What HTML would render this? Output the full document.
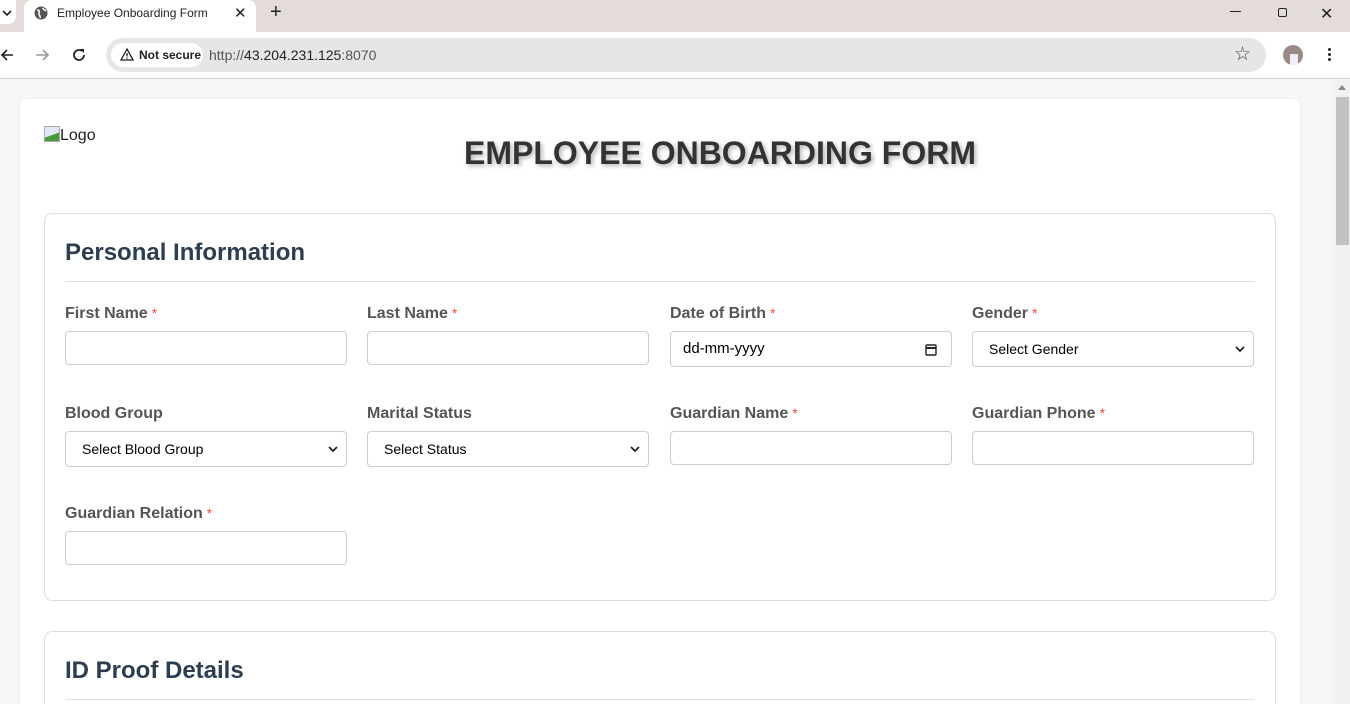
<!DOCTYPE html>
<html style="width:1350px;height:704px;overflow:hidden"><head><meta charset="utf-8"><style>
*{box-sizing:border-box;margin:0;padding:0}
body{width:1350px;height:704px;overflow:hidden;font-family:"Liberation Sans",Arial,sans-serif;background:#f4f5f7;position:relative}
.tabbar{position:absolute;left:0;top:0;width:1350px;height:32px;background:#e3dcda}
.tab{position:absolute;left:24px;top:0;width:232px;height:32px;background:#fff;border-radius:8px 8px 0 0;font-size:12px;color:#222}
.addr{position:absolute;left:0;top:32px;width:1350px;height:47px;background:#fff;border-bottom:1px solid #d0d0d0}
.url{position:absolute;left:106px;top:6px;width:1160px;height:34px;background:#e6e6e6;border-radius:17px}
.ns{position:absolute;left:5px;top:5px;height:24px;width:92px;background:#fff;border-radius:12px;font-size:12px;font-weight:bold;color:#222;line-height:24px;padding-left:28px}
.page{position:absolute;left:0;top:80px;width:1335px;height:624px;background:#f5f6f8}
.sb{position:absolute;left:1335px;top:80px;width:15px;height:624px;background:#f1f1f1}
.card{position:absolute;left:20px;top:99px;width:1280px;height:605px;background:#fff;border-radius:8px 8px 0 0;box-shadow:0 1px 4px rgba(0,0,0,.06)}
h1{position:absolute;top:135px;text-align:center;font-size:32px;font-weight:bold;color:#333;text-shadow:2px 2px 5px rgba(0,0,0,.3)}
.sec{position:absolute;left:44px;width:1232px;border:1px solid #ddd;border-radius:8px;background:#fff}
.sec h2{position:absolute;left:20px;font-size:24px;color:#2c3e50;font-weight:bold}
.sec .hr{position:absolute;left:20px;right:20px;height:1px;background:#ddd}
.lbl{position:absolute;font-size:16px;font-weight:bold;color:#555}
.lbl i{font-style:normal;color:#e74c3c;font-weight:normal;font-size:14px;margin-left:4px}
.in{position:absolute;width:282px;height:34px;border:1px solid #ccc;border-radius:4px;background:#fff;font-size:14px;color:#000;padding-left:16px;line-height:34px}
.sel{height:36px;line-height:34px}
</style></head><body>
<div class="tabbar">
<div style="position:absolute;left:0;top:0;width:16px;height:24px;background:#fff;border-radius:0 0 8px 0"></div>
<svg style="position:absolute;left:2px;top:9px" width="10" height="8"><path d="M1 2l4 4 4-4" stroke="#222" stroke-width="1.6" fill="none"/></svg>
<div class="tab"><svg style="position:absolute;left:10px;top:6px" width="14" height="14"><circle cx="7" cy="7" r="6.5" fill="#555"/><path d="M3 4c2 0 3 1 2 3s2 2 1 5M9 2c0 2 2 2 3 3" stroke="#fff" stroke-width="1.5" fill="none"/></svg><span style="position:absolute;left:33px;top:6px">Employee Onboarding Form</span><span style="position:absolute;left:210px;top:4px;font-size:15px">✕</span></div>
<span style="position:absolute;left:270px;top:1px;font-size:20px;color:#222">+</span>
<div style="position:absolute;left:1230px;top:11px;width:11px;height:1px;background:#222"></div>
<div style="position:absolute;left:1278px;top:8px;width:9px;height:9px;border:1px solid #222;border-radius:2px"></div>
<span style="position:absolute;left:1320px;top:4px;font-size:16px;color:#222">✕</span>
</div>
<div class="addr">
<svg style="position:absolute;left:0;top:15px" width="16" height="16"><path d="M13 8H2M7 3L2 8l5 5" stroke="#222" stroke-width="1.6" fill="none"/></svg>
<svg style="position:absolute;left:34px;top:15px" width="16" height="16"><path d="M2 8h11M9 3l5 5-5 5" stroke="#999" stroke-width="1.6" fill="none"/></svg>
<svg style="position:absolute;left:71px;top:15px" width="16" height="16"><path d="M13 8a5 5 0 1 1-2-4" stroke="#222" stroke-width="1.8" fill="none"/><path d="M9 2h4v4z" fill="#222"/></svg>
<div class="url"><div class="ns"><svg style="position:absolute;left:9px;top:5px" width="14" height="13"><path d="M7 1L1 12h12z" stroke="#222" stroke-width="1.3" fill="none"/><path d="M7 5v3.5M7 9.5v1.2" stroke="#222" stroke-width="1.3"/></svg>Not secure</div>
<span style="position:absolute;left:103px;top:9px;font-size:14px;color:#555">http://<span style="color:#222">43.204.231.125</span>:8070</span>
<span style="position:absolute;left:1128px;top:5px;font-size:19px;color:#444">☆</span></div>
<div style="position:absolute;left:1283px;top:13px;width:20px;height:20px;border-radius:50%;background:#9a8a86"><div style="position:absolute;left:7px;top:9px;width:8px;height:11px;background:#eef"></div></div>
<div style="position:absolute;left:1328px;top:16px;width:3px;height:3px;background:#222;border-radius:50%;box-shadow:0 5px 0 #222,0 10px 0 #222"></div>
</div>
<div class="page"></div>
<div class="sb"><div style="position:absolute;left:1px;top:17px;width:13px;height:148px;background:#c1c1c1"></div><div style="position:absolute;left:3px;top:5px;border:4px solid transparent;border-bottom:5px solid #888;border-top:none"></div></div>
<div class="card"></div>
<div style="position:absolute;left:44px;top:126px;font-size:16px;color:#222"><span style="display:inline-block;width:16px;height:16px;border:1px solid #aaa;background:linear-gradient(160deg,#dfe8f5 55%,#4a9a3a 56%);vertical-align:-2px"></span>Logo</div>
<h1 style="left:20px;width:1400px">EMPLOYEE ONBOARDING FORM</h1>
<div class="sec" style="top:213px;height:388px">
<h2 style="top:25px">Personal Information</h2><div class="hr" style="top:67px"></div></div>
<div class="lbl" style="left:65px;top:305px">First Name<i>*</i></div>
<div class="lbl" style="left:367px;top:305px">Last Name<i>*</i></div>
<div class="lbl" style="left:670px;top:305px">Date of Birth<i>*</i></div>
<div class="lbl" style="left:972px;top:305px">Gender<i>*</i></div>
<div class="in" style="left:65px;top:331px"></div>
<div class="in" style="left:367px;top:331px"></div>
<div class="in" style="left:670px;top:331px;height:36px;padding-left:12px;font-size:15px">dd-mm-yyyy<svg style="position:absolute;right:14px;top:11px" width="12" height="13"><rect x="1" y="2" width="10" height="10" rx="1" stroke="#222" stroke-width="1.4" fill="none"/><path d="M1 5h10" stroke="#222" stroke-width="2"/></svg></div>
<div class="in sel" style="left:972px;top:331px">Select Gender<svg style="position:absolute;right:8px;top:14px" width="10" height="7"><path d="M1 1l4 4 4-4" stroke="#222" stroke-width="1.8" fill="none"/></svg></div>
<div class="lbl" style="left:65px;top:405px">Blood Group</div>
<div class="lbl" style="left:367px;top:405px">Marital Status</div>
<div class="lbl" style="left:670px;top:405px">Guardian Name<i>*</i></div>
<div class="lbl" style="left:972px;top:405px">Guardian Phone<i>*</i></div>
<div class="in sel" style="left:65px;top:431px">Select Blood Group<svg style="position:absolute;right:8px;top:14px" width="10" height="7"><path d="M1 1l4 4 4-4" stroke="#222" stroke-width="1.8" fill="none"/></svg></div>
<div class="in sel" style="left:367px;top:431px">Select Status<svg style="position:absolute;right:8px;top:14px" width="10" height="7"><path d="M1 1l4 4 4-4" stroke="#222" stroke-width="1.8" fill="none"/></svg></div>
<div class="in" style="left:670px;top:431px"></div>
<div class="in" style="left:972px;top:431px"></div>
<div class="lbl" style="left:65px;top:505px">Guardian Relation<i>*</i></div>
<div class="in" style="left:65px;top:531px"></div>
<div class="sec" style="top:631px;height:73px;border-bottom:none;border-radius:8px 8px 0 0">
<h2 style="top:25px">ID Proof Details</h2><div class="hr" style="top:67px"></div></div>
</body></html>
